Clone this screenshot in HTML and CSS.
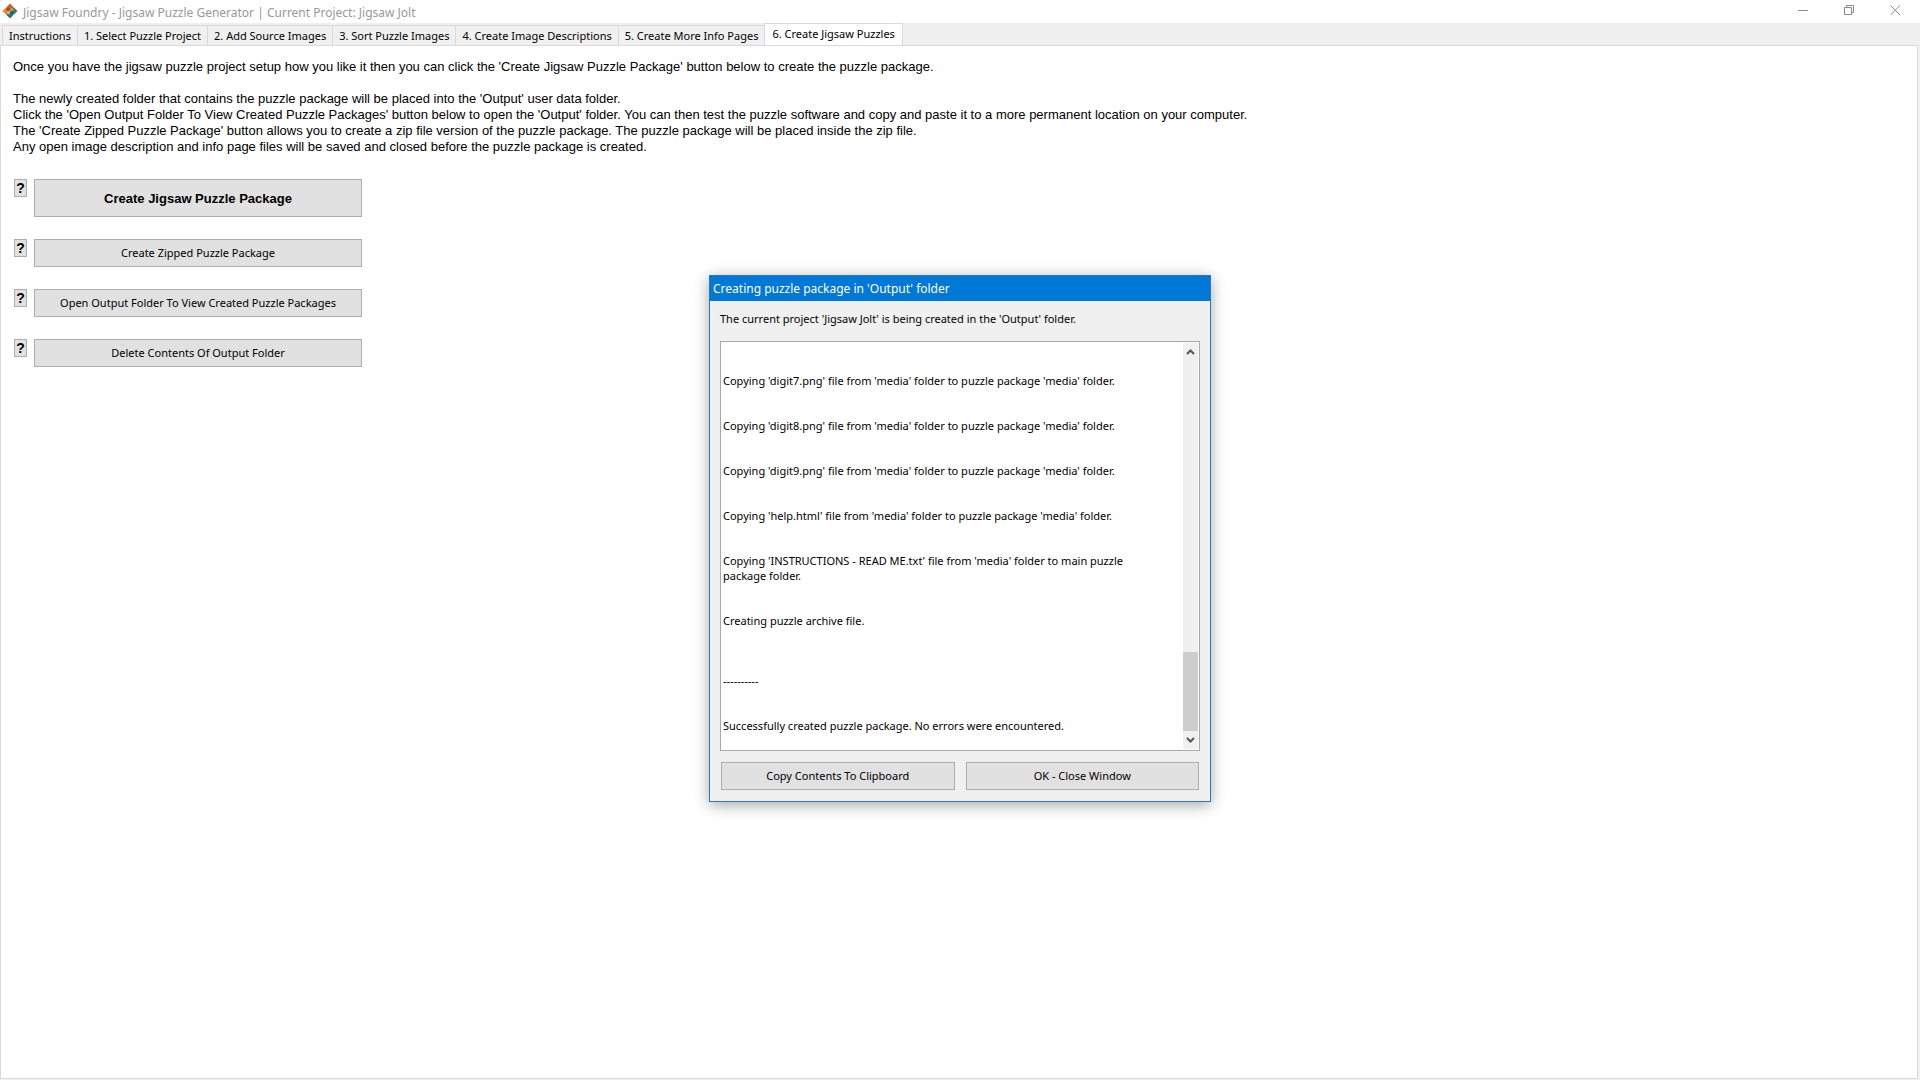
FILE: index.html
```html
<!DOCTYPE html>
<html lang="en">
<head>
    <meta charset="UTF-8">
    <meta name="viewport" content="width=device-width, initial-scale=1.0">
    <title>Jigsaw Foundry - Jigsaw Puzzle Generator</title>
    <link rel="stylesheet" href="styles.css">
</head>
<body>
    <header class="titlebar">
        <svg class="app-icon" width="16" height="16" viewBox="0 0 16 16">
            <path d="M8 0.5 L4.2 4.4 L8 8 L11.6 4.2 Z" fill="#c9622b"/>
            <path d="M4.2 4.4 L0.4 8.1 L4.3 11.8 L8 8 Z" fill="#e58a2c"/>
            <path d="M11.6 4.2 L15.5 8.1 L11.7 11.8 L8 8 Z" fill="#2f7d57"/>
            <path d="M8 8 L4.3 11.8 L8 15.5 L11.7 11.8 Z" fill="#2f6f96"/>
            <circle cx="6" cy="6.2" r="1.7" fill="#bb3a26"/>
            <circle cx="10" cy="6.4" r="1.5" fill="#d9a03a"/>
            <circle cx="6.6" cy="9.8" r="1.4" fill="#f0c03c"/>
            <circle cx="9.9" cy="9.8" r="1.4" fill="#24566f"/>
        </svg>
        <h1>Jigsaw Foundry - Jigsaw Puzzle Generator | Current Project: Jigsaw Jolt</h1>
        <div class="window-controls">
            <button aria-label="Minimize"><svg width="11" height="11" viewBox="0 0 11 11"><path d="M0 5.5h10"/></svg></button>
            <button aria-label="Restore"><svg width="11" height="11" viewBox="0 0 11 11"><path d="M.5 2.5h7v7h-7zM2.5 2.5v-2h7v7h-2"/></svg></button>
            <button aria-label="Close"><svg width="11" height="11" viewBox="0 0 11 11"><path d="M.5 .5l9.500 9.500M10 .5l-9.500 9.500"/></svg></button>
        </div>
    </header>

    <nav class="tabs">
        <button>Instructions</button>
        <button>1. Select Puzzle Project</button>
        <button>2. Add Source Images</button>
        <button>3. Sort Puzzle Images</button>
        <button>4. Create Image Descriptions</button>
        <button>5. Create More Info Pages</button>
        <button class="active">6. Create Jigsaw Puzzles</button>
    </nav>

    <main class="panel">
        <div class="intro">
            <p>Once you have the jigsaw puzzle project setup how you like it then you can click the 'Create Jigsaw Puzzle Package' button below to create the puzzle package.</p>
            <p>The newly created folder that contains the puzzle package will be placed into the 'Output' user data folder.<br>
            Click the 'Open Output Folder To View Created Puzzle Packages' button below to open the 'Output' folder. You can then test the puzzle software and copy and paste it to a more permanent location on your computer.<br>
            The 'Create Zipped Puzzle Package' button allows you to create a zip file version of the puzzle package. The puzzle package will be placed inside the zip file.<br>
            Any open image description and info page files will be saved and closed before the puzzle package is created.</p>
        </div>

        <div class="actions">
            <div class="action">
                <button class="help">?</button>
                <button class="btn primary">Create Jigsaw Puzzle Package</button>
            </div>
            <div class="action">
                <button class="help">?</button>
                <button class="btn">Create Zipped Puzzle Package</button>
            </div>
            <div class="action">
                <button class="help">?</button>
                <button class="btn">Open Output Folder To View Created Puzzle Packages</button>
            </div>
            <div class="action">
                <button class="help">?</button>
                <button class="btn">Delete Contents Of Output Folder</button>
            </div>
        </div>
    </main>

    <section class="dialog" role="dialog" aria-labelledby="dialog-title">
        <h2 id="dialog-title">Creating puzzle package in 'Output' folder</h2>
        <div class="dialog-body">
            <label for="log">The current project 'Jigsaw Jolt' is being created in the 'Output' folder.</label>
            <div class="log-box">
                <textarea id="log" readonly>


Copying 'digit7.png' file from 'media' folder to puzzle package 'media' folder.


Copying 'digit8.png' file from 'media' folder to puzzle package 'media' folder.


Copying 'digit9.png' file from 'media' folder to puzzle package 'media' folder.


Copying 'help.html' file from 'media' folder to puzzle package 'media' folder.


Copying 'INSTRUCTIONS - READ ME.txt' file from 'media' folder to main puzzle package folder.


Creating puzzle archive file.



----------


Successfully created puzzle package. No errors were encountered.</textarea>
                <div class="scrollbar">
                    <svg width="9" height="6" viewBox="0 0 9 6"><path d="M1 5l3.500-3.500L8 5"/></svg>
                    <div class="thumb"></div>
                    <svg width="9" height="6" viewBox="0 0 9 6"><path d="M1 1l3.500 3.500L8 1"/></svg>
                </div>
            </div>
            <div class="dialog-buttons">
                <button class="btn">Copy Contents To Clipboard</button>
                <button class="btn">OK - Close Window</button>
            </div>
        </div>
    </section>
</body>
</html>
```
FILE: styles.css
```css
* {
    box-sizing: border-box;
}
body {
    margin: 0;
    min-height: 100vh;
    display: flex;
    flex-direction: column;
    background: #f0f0f0;
    color: #000;
    font-family: "Noto Sans", sans-serif;
    font-size: 11px;
    line-height: 15px;
}
h1, h2, p {
    margin: 0;
    font-weight: normal;
}
button {
    font: inherit;
    color: inherit;
    padding: 0;
    border: none;
    background: none;
}

/* Title bar */
.titlebar {
    display: flex;
    align-items: center;
    height: 23px;
    padding: 0 2px;
    background: #fff;
    color: #999;
}
.app-icon {
    margin-bottom: 1px;
}
.titlebar h1 {
    flex: 1;
    margin-left: 5px;
    padding-top: 2px;
    font-size: 12px;
}
.window-controls {
    display: flex;
    height: 20px;
}
.window-controls button {
    width: 46px;
}
.window-controls path {
    fill: none;
    stroke: #8a8a8a;
}

/* Tabs */
.tabs {
    display: flex;
    align-items: flex-end;
    height: 22px;
    padding-left: 2px;
}
.tabs button {
    height: 20px;
    padding: 0 6px;
    border: 1px solid #d9d9d9;
    border-width: 1px 0 0 1px;
    white-space: nowrap;
}
.tabs .active {
    height: 23px;
    margin-bottom: -1px;
    padding: 0 7px 4px;
    border-right-width: 1px;
    background: #fff;
}

/* Main panel */
.panel {
    flex: 1;
    margin: 0 2px 1px 0;
    padding: 13px 12px;
    border: 1px solid #d9d9d9;
    background: #fff;
}
.intro {
    font-family: "Liberation Sans", Arial, sans-serif;
    font-size: 13px;
    line-height: 16px;
}
.intro p + p {
    margin-top: 16px;
}
.actions {
    display: grid;
    gap: 22px;
    margin-top: 24px;
    padding-left: 1px;
}
.action {
    display: flex;
    align-items: flex-start;
    gap: 7px;
}
.help {
    width: 13px;
    height: 18px;
    border: 1px solid #adadad;
    background: #e1e1e1;
    font: bold 14px/16px "Liberation Sans", Arial, sans-serif;
}
.btn {
    height: 28px;
    padding-bottom: 2px;
    border: 1px solid #adadad;
    background: #e1e1e1;
}
.action .btn {
    width: 328px;
}
.action .primary {
    height: 38px;
    padding: 2px 0 0;
    font: bold 13px/16px "Liberation Sans", Arial, sans-serif;
}

/* Progress dialog */
.dialog {
    position: absolute;
    top: 275px;
    left: 709px;
    width: 502px;
    border: 1px solid #2a7ab8;
    background: #f0f0f0;
    box-shadow: 0 3px 14px rgba(0, 0, 0, 0.35);
}
.dialog h2 {
    height: 25px;
    padding-left: 3px;
    background: #0078d7;
    color: #fff;
    font-size: 12px;
    line-height: 26px;
}
.dialog-body {
    padding: 10px 10px 11px;
}
.dialog label {
    display: block;
}
.log-box {
    display: flex;
    height: 410px;
    margin-top: 15px;
    padding: 1px;
    border: 1px solid #a5a8ad;
    background: #fff;
}
.log-box textarea {
    flex: 1;
    min-width: 0;
    padding: 0 20px 0 1px;
    border: none;
    outline: none;
    resize: none;
    overflow: hidden;
    background: none;
    color: inherit;
    font: inherit;
}
.scrollbar {
    display: flex;
    flex-direction: column;
    align-items: center;
    width: 15px;
    padding: 6px 0;
    background: #f0f0f0;
}
.scrollbar path {
    fill: none;
    stroke: #555;
    stroke-width: 2;
}
.thumb {
    width: 100%;
    height: 79px;
    margin-top: auto;
    margin-bottom: 6px;
    background: #cdcdcd;
}
.dialog-buttons {
    display: grid;
    grid-template-columns: 1fr 1fr;
    gap: 11px;
    margin-top: 11px;
    padding: 0 1px;
}
```
